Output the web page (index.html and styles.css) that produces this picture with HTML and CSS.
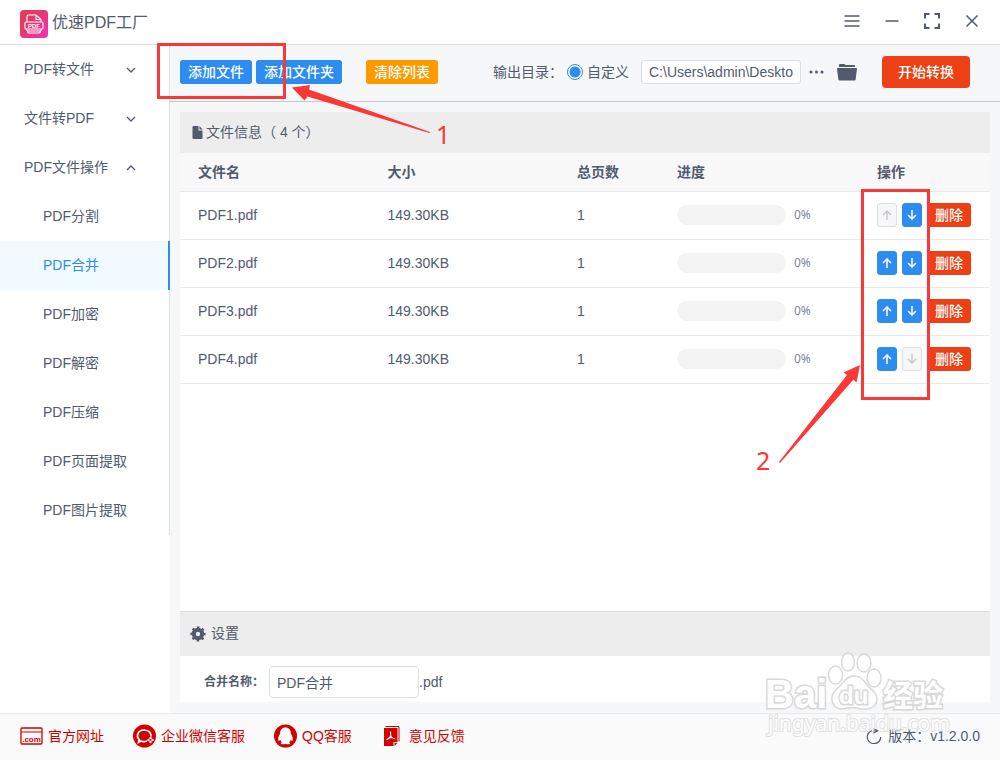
FILE: index.html
```html
<!DOCTYPE html>
<html lang="zh-CN">
<head>
<meta charset="utf-8">
<meta name="viewport" content="width=device-width, initial-scale=1">
<title>优速PDF工厂</title>
<link rel="stylesheet" href="styles.css">
</head>
<body>
<div class="app">
  <header class="titlebar">
    <svg class="logo" viewBox="0 0 28 28" aria-hidden="true">
      <defs>
        <linearGradient id="logo-fill" x1="0" y1="0" x2="1" y2="1">
          <stop offset="0.3" stop-color="#e63a60"/>
          <stop offset="1" stop-color="#ee32b4"/>
        </linearGradient>
      </defs>
      <rect width="28" height="28" rx="4" fill="url(#logo-fill)"/>
      <path d="M7 12V6.500Q7 5 8.500 5H16L21 9.500V12M16 5V9.500H21M6 12H22Q23 12 23 13V18Q23 19 22 19H6Q5 19 5 18V13Q5 12 6 12ZM6.500 19.500L7.500 21H20.500L21.500 19.500M7.500 21Q7.500 23 9 23H19Q20.500 23 20.500 21" fill="none" stroke="#fff" stroke-width="1.100"/>
      <text x="14" y="18" text-anchor="middle" class="logo-text">PDF</text>
    </svg>
    <h1 class="title">优速PDF工厂</h1>
    <div class="window-buttons">
      <button type="button" aria-label="菜单"><svg viewBox="0 0 16 16"><path d="M.5 3.500H15.500M.5 8.500H15.500M.5 13.500H15.500" transform="translate(0 -.5)"/></svg></button>
      <button type="button" aria-label="最小化"><svg viewBox="0 0 16 16"><path d="M1.500 8H14.500"/></svg></button>
      <button type="button" aria-label="最大化"><svg viewBox="0 0 16 16"><path d="M1 5.500V1H5.500M10.500 1H15V5.500M15 10.500V15H10.500M5.500 15H1V10.500" stroke-width="2"/></svg></button>
      <button type="button" aria-label="关闭"><svg viewBox="0 0 16 16"><path d="M2.500 2.500L13.500 13.500M13.500 2.500L2.500 13.500"/></svg></button>
    </div>
  </header>

  <div class="body">
    <nav class="sidebar">
      <div class="menu">
        <button type="button" class="menu-group">PDF转文件<svg viewBox="0 0 10 6"><path d="M1 1L5 5L9 1"/></svg></button>
        <button type="button" class="menu-group">文件转PDF<svg viewBox="0 0 10 6"><path d="M1 1L5 5L9 1"/></svg></button>
        <button type="button" class="menu-group">PDF文件操作<svg viewBox="0 0 10 6"><path d="M1 5L5 1L9 5"/></svg></button>
        <a href="#" class="menu-item">PDF分割</a>
        <a href="#" class="menu-item active">PDF合并</a>
        <a href="#" class="menu-item">PDF加密</a>
        <a href="#" class="menu-item">PDF解密</a>
        <a href="#" class="menu-item">PDF压缩</a>
        <a href="#" class="menu-item">PDF页面提取</a>
        <a href="#" class="menu-item">PDF图片提取</a>
      </div>
    </nav>

    <main class="main">
      <div class="toolbar">
        <button type="button" class="btn primary">添加文件</button>
        <button type="button" class="btn primary">添加文件夹</button>
        <button type="button" class="btn warning">清除列表</button>
        <div class="output">
          <span class="output-label">输出目录：</span>
          <label class="radio"><input type="radio" name="output" checked>自定义</label>
          <input class="path" type="text" aria-label="输出目录" value="C:\Users\admin\Deskto">
          <button type="button" class="icon-btn more" aria-label="更多"><svg viewBox="0 0 16 16"><circle cx="2" cy="8" r="1.500"/><circle cx="7.500" cy="8" r="1.500"/><circle cx="13" cy="8" r="1.500"/></svg></button>
          <button type="button" class="icon-btn folder" aria-label="打开文件夹"><svg viewBox="0 0 20 18"><path d="M2 4V2Q2 1 3 1H7Q8 1 8.500 2H17Q18 2 18 3V4Z"/><path d="M.8 5H19.200Q20 5 20 6L18.600 16.500Q18.500 17.500 17.500 17.500H2.500Q1.500 17.500 1.400 16.500L0 6Q0 5 .8 5Z"/></svg></button>
          <button type="button" class="btn start">开始转换</button>
        </div>
      </div>

      <div class="content">
        <section class="panel files">
          <h2 class="panel-head"><svg class="file-icon" viewBox="0 0 10 13"><path d="M1 0H6V4.500H10V12Q10 13 9 13H1Q0 13 0 12V1Q0 0 1 0ZM7 0L10 3.500H7Z"/></svg>文件信息（ 4 个）</h2>
          <table class="table">
            <colgroup><col><col><col class="col-pages"><col class="col-progress"><col class="col-actions"></colgroup>
            <thead><tr><th>文件名</th><th>大小</th><th>总页数</th><th>进度</th><th>操作</th></tr></thead>
            <tbody>
              <tr><td>PDF1.pdf</td><td>149.30KB</td><td>1</td>
                <td><div class="progress"><span class="track"></span><span class="percent">0%</span></div></td>
                <td><div class="actions"><button type="button" class="move" aria-label="上移" disabled><svg viewBox="0 0 10 10"><path d="M5 10V1M1 5L5 1L9 5"/></svg></button><button type="button" class="move" aria-label="下移"><svg viewBox="0 0 10 10"><path d="M5 0V9M1 5L5 9L9 5"/></svg></button><button type="button" class="btn danger">删除</button></div></td></tr>
              <tr><td>PDF2.pdf</td><td>149.30KB</td><td>1</td>
                <td><div class="progress"><span class="track"></span><span class="percent">0%</span></div></td>
                <td><div class="actions"><button type="button" class="move" aria-label="上移"><svg viewBox="0 0 10 10"><path d="M5 10V1M1 5L5 1L9 5"/></svg></button><button type="button" class="move" aria-label="下移"><svg viewBox="0 0 10 10"><path d="M5 0V9M1 5L5 9L9 5"/></svg></button><button type="button" class="btn danger">删除</button></div></td></tr>
              <tr><td>PDF3.pdf</td><td>149.30KB</td><td>1</td>
                <td><div class="progress"><span class="track"></span><span class="percent">0%</span></div></td>
                <td><div class="actions"><button type="button" class="move" aria-label="上移"><svg viewBox="0 0 10 10"><path d="M5 10V1M1 5L5 1L9 5"/></svg></button><button type="button" class="move" aria-label="下移"><svg viewBox="0 0 10 10"><path d="M5 0V9M1 5L5 9L9 5"/></svg></button><button type="button" class="btn danger">删除</button></div></td></tr>
              <tr><td>PDF4.pdf</td><td>149.30KB</td><td>1</td>
                <td><div class="progress"><span class="track"></span><span class="percent">0%</span></div></td>
                <td><div class="actions"><button type="button" class="move" aria-label="上移"><svg viewBox="0 0 10 10"><path d="M5 10V1M1 5L5 1L9 5"/></svg></button><button type="button" class="move" aria-label="下移" disabled><svg viewBox="0 0 10 10"><path d="M5 0V9M1 5L5 9L9 5"/></svg></button><button type="button" class="btn danger">删除</button></div></td></tr>
            </tbody>
          </table>
        </section>

        <section class="panel settings">
          <h2 class="panel-head settings-head"><svg class="gear" viewBox="0 0 16 16"><circle cx="8" cy="8" r="4.200"/><circle cx="8" cy="8" r="6.600" class="gear-teeth"/></svg>设置</h2>
          <div class="form-row">
            <label class="form-label" for="merge-name">合并名称：</label>
            <input id="merge-name" class="name-input" type="text" value="PDF合并">
            <span>.pdf</span>
          </div>
        </section>
      </div>
    </main>
  </div>

  <footer class="footer">
    <a href="#" class="foot-link"><svg viewBox="0 0 24 24"><rect x="1" y="4" width="21" height="16" rx="1" fill="none" stroke="currentColor" stroke-width="1.300"/><path d="M1 8H22" stroke="currentColor"/><text x="11.500" y="18" text-anchor="middle" class="com-text">.com</text></svg>官方网址</a>
    <a href="#" class="foot-link"><svg viewBox="0 0 24 24"><circle cx="11.500" cy="12" r="11.500" fill="currentColor"/><path d="M14 17Q10.500 18.200 8 17L5.500 18.300L6.200 15.600Q3.800 13.500 4.700 10.300Q6 6 11 6Q16.500 6.200 17.800 10.300Q18 11.500 17.800 12.500" fill="none" stroke="#fff" stroke-width="1.700"/><g fill="#fff"><circle cx="17.500" cy="14" r="1.200"/><circle cx="15.500" cy="16" r="1.200"/><circle cx="17.500" cy="18" r="1.200"/><circle cx="19.500" cy="16" r="1.200"/></g></svg>企业微信客服</a>
    <a href="#" class="foot-link"><svg viewBox="0 0 24 24"><circle cx="11.500" cy="12" r="11.500" fill="currentColor"/><path d="M11.500 3.500C7.800 3.500 6 6.200 6.200 9.500C4.600 12 3.700 14.500 4.500 16.800C5 17.300 5.800 16.300 6.200 15.700Q6.800 17.200 8 18.200Q6 19 7 20Q10 20.800 11.500 19.800Q13 20.800 16 20Q17 19 15 18.200Q16.200 17.200 16.800 15.700C17.200 16.300 18 17.300 18.500 16.800C19.300 14.500 18.400 12 16.800 9.500C17 6.200 15.200 3.500 11.500 3.500Z" fill="#fff"/></svg>QQ客服</a>
    <a href="#" class="foot-link"><svg viewBox="0 0 24 24"><path d="M4.500 2.500H18V17.500" fill="none" stroke="currentColor"/><path d="M3 4H16.500V18H12.500V22H3ZM13.500 19H16.500L13.500 22Z" fill="currentColor"/><path d="M9.500 7.500Q10 11.500 9.300 12.500Q8 14.800 5.500 15.800M9.300 11.800Q11 14.600 14.200 15M7.500 14L11.500 13.500" fill="none" stroke="#fff" stroke-width="1.200"/></svg>意见反馈</a>
    <button type="button" class="version"><svg viewBox="0 0 16 16"><path d="M6 2.600A6.700 6.700 0 1 0 14.700 9" fill="none" stroke="currentColor" stroke-width="1.200"/><path d="M7.500 0L13 2.800L7.500 5.800Z" fill="currentColor"/></svg>版本：v1.2.0.0</button>
  </footer>

  <svg class="overlay" width="1000" height="760" viewBox="0 0 1000 760" aria-hidden="true">
    <g class="watermark">
      <ellipse cx="835.500" cy="675" rx="7" ry="9"/>
      <ellipse cx="848" cy="662" rx="6.500" ry="9"/>
      <ellipse cx="864" cy="663" rx="7" ry="9"/>
      <ellipse cx="874" cy="678" rx="7" ry="9"/>
      <path d="M854 676C847 676 844 682 840 686C835 690 831 694 832 701C834 709 841 710 847 708Q854 707 861 709C869 710 876 708 877 700C877 693 872 690 868 686C864 681 861 676 854 676Z"/>
      <text x="765" y="708" class="wm-bai">Bai</text>
      <text x="839" y="704" class="wm-du">du</text>
      <text x="883" y="706" class="wm-cn">经验</text>
      <text x="768" y="731" class="wm-url">jingyan.baidu.com</text>
    </g>
    <g class="marks">
      <rect x="158.500" y="44.500" width="126" height="53"/>
      <rect x="862.500" y="190.500" width="66" height="208"/>
      <path d="M292 87.500L310 85L309 89.500L430 132L429.500 133L307.500 96.500L304.500 100.500Z"/>
      <path d="M860 365L843.500 372.500L847 375L779 462L780 463L853.500 379.500L856.500 382.500Z"/>
      <text x="436" y="144">1</text>
      <text x="756" y="470">2</text>
    </g>
  </svg>
</div>
</body>
</html>
```
FILE: styles.css
```css
* { box-sizing: border-box; }

body {
  margin: 0;
  background: #fff;
  color: #515a6e;
  font: 14px/20px "Liberation Sans", "Noto Sans CJK SC", sans-serif;
}

button, input { font: inherit; color: inherit; }
button { padding: 0; border: 0; background: none; cursor: pointer; }
a { color: inherit; text-decoration: none; }
svg { flex: none; }

.app {
  position: relative;
  display: flex;
  flex-direction: column;
  min-height: 100vh;
  overflow: hidden;
}

/* Title bar */
.titlebar {
  display: flex;
  align-items: center;
  gap: 4px;
  height: 45px;
  padding: 4px 8px 0 20px;
  border-bottom: 1px solid #dcdee2;
  background: #fefefe;
}
.logo { width: 28px; height: 28px; }
.logo-text { font: bold 6px "Liberation Sans", sans-serif; fill: #fff; }
.title { margin: 0; padding-bottom: 2px; font-size: 16px; font-weight: 400; }
.window-buttons { display: flex; margin-left: auto; }
.window-buttons button {
  display: grid;
  place-items: center;
  width: 40px;
  height: 40px;
  padding-bottom: 6px;
}
.window-buttons svg {
  width: 16px;
  height: 16px;
  fill: none;
  stroke: currentColor;
  stroke-width: 1.5;
}

.body { display: flex; flex: 1; }

/* Sidebar */
.sidebar { flex: none; width: 170px; background: #fff; }
.menu { display: flex; flex-direction: column; border-right: 1px solid #dcdee2; }
.menu-group, .menu-item {
  display: flex;
  align-items: center;
  height: 49px;
  padding-bottom: 2px;
  text-align: left;
}
.menu-group { justify-content: space-between; padding: 0 33px 2px 24px; }
.menu-group svg {
  width: 10px;
  height: 6px;
  margin-top: 2px;
  fill: none;
  stroke: currentColor;
  stroke-width: 1.3;
}
.menu-item { padding-left: 43px; }
.menu-item.active {
  margin-right: -1px;
  border-right: 2px solid #2d8cf0;
  background: #f0faff;
  color: #2d8cf0;
}

/* Toolbar */
.main { display: flex; flex: 1; flex-direction: column; min-width: 0; background: #f5f7f9; }
.toolbar {
  display: flex;
  align-items: center;
  gap: 4px;
  height: 57px;
  padding: 0 30px 3px 10px;
  border-bottom: 1px solid #c5c8ce;
}
.btn {
  flex: none;
  height: 24px;
  padding: 0 8px;
  border-radius: 3px;
  color: #fff;
  font-weight: 500;
}
.primary { background: #2d8cf0; }
.warning { margin-left: 20px; background: #f90; }
.danger { background: #ed4014; }
.start { height: 32px; padding: 0 16px; border-radius: 4px; background: #ed4014; }
.output { display: flex; align-items: center; margin-left: auto; }
.output-label { margin-right: 4px; }
.radio { display: flex; align-items: center; gap: 4px; margin-right: 12px; }
.radio input {
  appearance: none;
  width: 16px;
  height: 16px;
  margin: 0;
  border: 1px solid #2d8cf0;
  border-radius: 50%;
  background: radial-gradient(circle, #2d8cf0 5px, #fff 6px);
}
.path {
  width: 160px;
  height: 24px;
  padding: 0 7px;
  border: 1px solid #dcdee2;
  border-radius: 3px;
  background: #fff;
}
.icon-btn { display: grid; place-items: center; fill: currentColor; }
.more { margin-left: 8px; }
.more svg { width: 16px; height: 16px; }
.folder { margin: 0 25px 0 12px; }
.folder svg { width: 20px; height: 18px; }

/* Panels */
.content { display: flex; flex: 1; flex-direction: column; padding: 10px 10px 11px; }
.panel { background: #fff; }
.files { flex: 1; }
.panel-head {
  display: flex;
  align-items: center;
  height: 41px;
  margin: 0;
  padding: 0 12px 2px;
  background: #ededed;
  font-size: 14px;
  font-weight: 400;
}
.panel-head svg { margin-top: 1px; fill: currentColor; }
.file-icon { width: 11px; height: 13px; margin-right: 3px; }
.settings-head { height: 45px; padding: 0 10px 2px; border-top: 1px solid #dcdee2; }
.gear { width: 16px; height: 16px; margin-right: 5px; }
.gear circle { fill: none; stroke: currentColor; stroke-width: 4; }
.gear .gear-teeth { stroke-width: 2; stroke-dasharray: 2.600 2.584; stroke-dashoffset: 1.300; }

/* File table */
.table { width: 100%; border-collapse: collapse; table-layout: fixed; }
.col-pages { width: 100px; }
.col-progress { width: 200px; }
.col-actions { width: 131px; }
.table th, .table td {
  padding: 0 18px;
  border-bottom: 1px solid #e8eaec;
  text-align: left;
}
.table th { height: 38px; background: #f8f8f9; font-weight: 700; }
.table td { height: 48px; }
.progress { display: flex; align-items: center; gap: 8px; }
.track { flex: 1; height: 20px; border-radius: 10px; background: #f3f3f3; }
.percent { width: 47px; color: #808695; font: 12px/20px "Noto Sans", sans-serif; }
.actions { display: flex; gap: 5px; }
.move {
  display: grid;
  flex: none;
  place-items: center;
  width: 20px;
  height: 24px;
  border: 1px solid #2d8cf0;
  border-radius: 3px;
  background: #2d8cf0;
  color: #fff;
}
.move:disabled { border-color: #dcdee2; background: #f7f7f7; color: #c5c8ce; cursor: default; }
.move svg { width: 10px; height: 10px; fill: none; stroke: currentColor; stroke-width: 1.5; }

/* Settings form */
.form-row { display: flex; align-items: center; height: 46px; padding: 6px 24px 0; }
.form-label { margin-right: 5px; font-size: 12px; font-weight: 700; }
.name-input {
  width: 150px;
  height: 32px;
  padding: 0 7px;
  border: 1px solid #dcdee2;
  border-radius: 4px;
  background: #fff;
}

/* Footer */
.footer {
  display: flex;
  align-items: center;
  gap: 29px;
  height: 47px;
  padding: 0 20px 2px;
  border-top: 1px solid #e8eaec;
  background: #fafafa;
}
.foot-link { display: flex; align-items: center; gap: 4px; color: #d20000; }
.foot-link svg { width: 24px; height: 24px; }
.com-text { font: bold 8px "Liberation Sans", sans-serif; fill: currentColor; }
.version { display: flex; align-items: center; gap: 6px; margin-left: auto; }
.version svg { width: 16px; height: 16px; }

/* Annotations above the window */
.overlay { position: absolute; top: 0; left: 0; pointer-events: none; }
.marks rect { fill: none; stroke: #fb3838; stroke-width: 3; }
.marks path, .marks text { fill: #fb3838; }
.marks text { font: 25px "Noto Sans", sans-serif; }
.watermark { opacity: 0.8; fill: #fff; stroke: #d0d0d0; stroke-width: 1.5; }
.watermark text { paint-order: stroke; stroke-width: 3; }
.wm-bai { font: bold 40px "Liberation Sans", sans-serif; }
.wm-du { font: bold 24px "Liberation Sans", sans-serif; }
.wm-cn { font: bold 30px "Noto Sans CJK SC", sans-serif; }
.watermark .wm-url { font: 21px "Noto Sans", sans-serif; opacity: 0.7; stroke-width: 2; }
```
